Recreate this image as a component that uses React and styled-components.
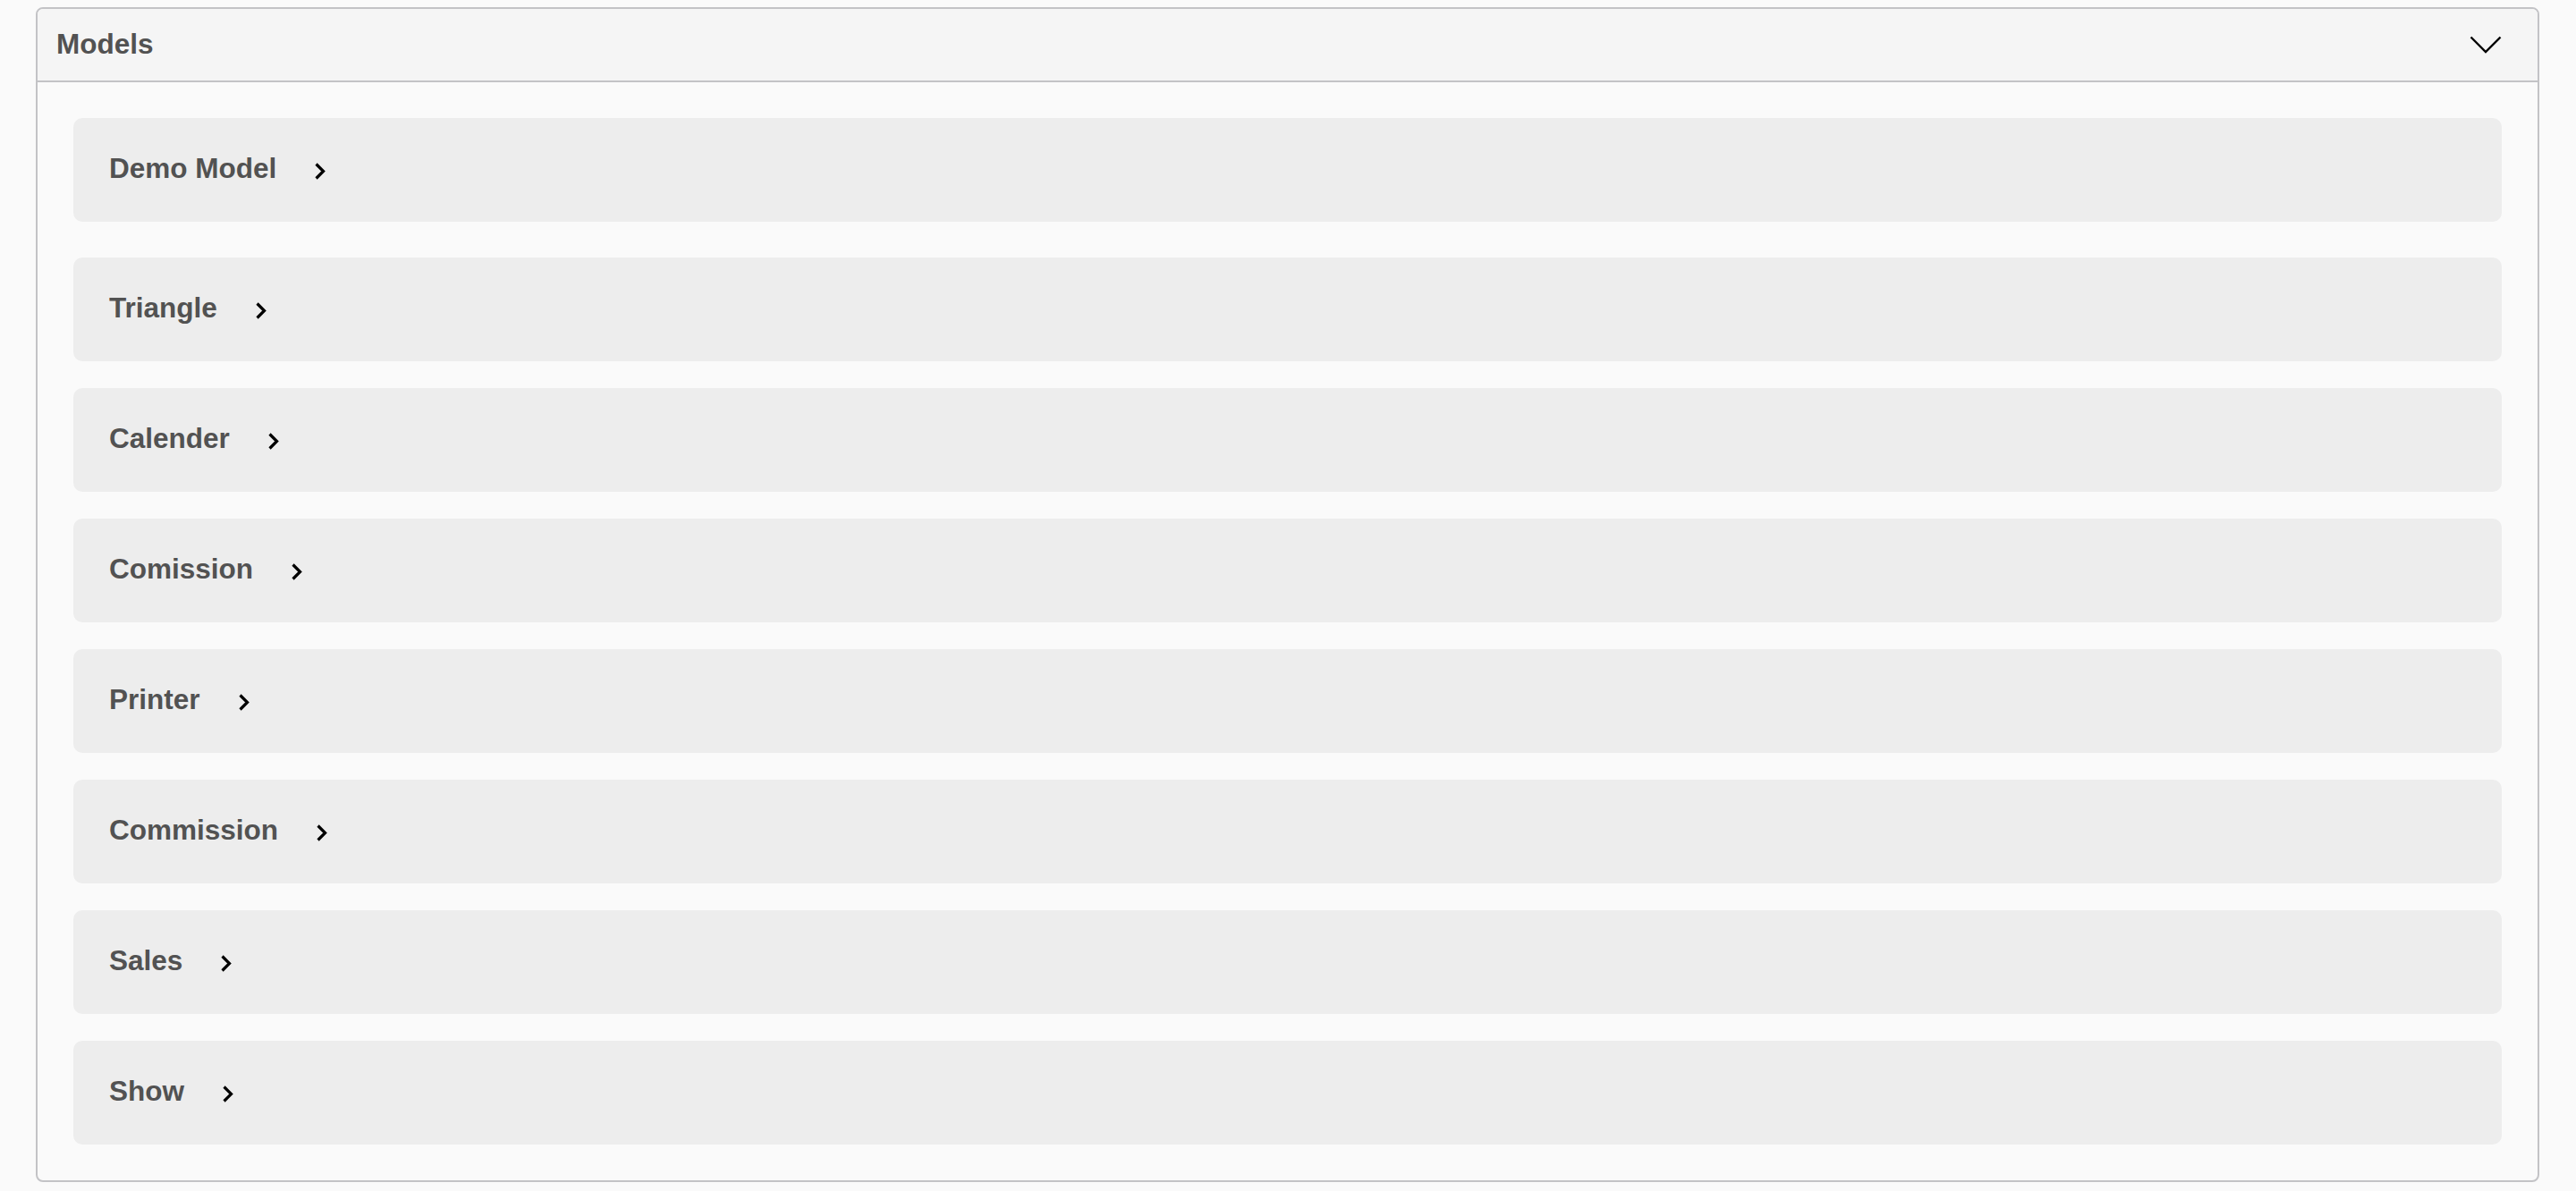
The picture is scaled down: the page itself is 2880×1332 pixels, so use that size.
import React from "react";
import styled, { createGlobalStyle } from "styled-components";

const Global = createGlobalStyle`
  html, body {
    margin: 0;
    padding: 0;
    background: #fafafa;
    font-family: "Liberation Sans", Arial, Helvetica, sans-serif;
  }
  #root {
    padding: 8px 41px 11px 40px;
  }
`;

const Panel = styled.section`
  border: 2px solid #c3c3c6;
  border-radius: 8px;
  background: #fafafa;
  overflow: hidden;
`;

const Header = styled.header`
  display: flex;
  align-items: center;
  justify-content: space-between;
  height: 80px;
  padding: 0 40px 0 21px;
  background: #f5f5f5;
  border-bottom: 2px solid #c3c3c6;
`;

const Title = styled.h2`
  margin: -2px 0 0;
  font-size: 31.5px;
  font-weight: 700;
  color: #525252;
`;

const Body = styled.div`
  display: flex;
  flex-direction: column;
  gap: 30px;
  padding: 40px;
`;

const Row = styled.div`
  display: flex;
  align-items: center;
  gap: 42px;
  height: 116px;
  padding: 0 40px;
  background: #ededed;
  border-radius: 10px;
  box-sizing: border-box;
  margin-bottom: ${(p) => (p.$first ? "10px" : "0")};
`;

const Label = styled.span`
  margin-top: -3px;
  font-size: 31.5px;
  font-weight: 700;
  color: #525252;
`;

const Chevron = styled.svg`
  display: block;
  flex: none;
  margin-top: ${(p) => p.$offset || 0}px;
`;

const ChevronRight = () => (
  <Chevron $offset={3} width="14" height="21" viewBox="0 0 14 21">
    <path d="M2.5 2.5 L10.5 10.5 L2.5 18.5" fill="none" stroke="#000" strokeWidth="3.2" />
  </Chevron>
);

const ChevronDown = () => (
  <Chevron width="36" height="20" viewBox="0 0 36 20">
    <path d="M1.5 1.5 L18 18 L34.5 1.5" fill="none" stroke="#000" strokeWidth="2.4" />
  </Chevron>
);

const models = [
  "Demo Model",
  "Triangle",
  "Calender",
  "Comission",
  "Printer",
  "Commission",
  "Sales",
  "Show",
];

export default function App() {
  return (
    <>
      <Global />
      <Panel>
        <Header>
          <Title>Models</Title>
          <ChevronDown />
        </Header>
        <Body>
          {models.map((m, i) => (
            <Row key={m} $first={i === 0}>
              <Label>{m}</Label>
              <ChevronRight />
            </Row>
          ))}
        </Body>
      </Panel>
    </>
  );
}
